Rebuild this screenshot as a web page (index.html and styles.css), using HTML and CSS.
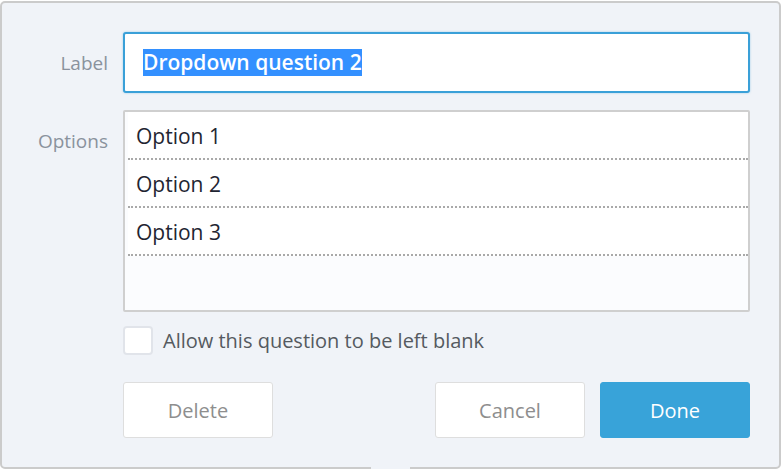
FILE: index.html
```html
<!DOCTYPE html>
<html lang="en">
<head>
<meta charset="utf-8">
<title>Dropdown question</title>
<link rel="stylesheet" href="styles.css">
</head>
<body>
<div class="panel">
  <div class="form">
    <div class="field-label label-center">Label</div>
    <div class="text-input"><span class="selected">Dropdown question 2</span></div>

    <div class="field-label label-top">Options</div>
    <div class="options">
      <div class="option">Option 1</div>
      <div class="option">Option 2</div>
      <div class="option">Option 3</div>
      <div class="option-empty"></div>
    </div>

    <div class="spacer"></div>
    <label class="check-row">
      <span class="checkbox"></span>
      <span class="check-text">Allow this question to be left blank</span>
    </label>

    <div class="spacer"></div>
    <div class="actions">
      <button class="btn btn-light">Delete</button>
      <div class="actions-right">
        <button class="btn btn-light">Cancel</button>
        <button class="btn btn-primary">Done</button>
      </div>
    </div>
  </div>
  <div class="notch"></div>
</div>
</body>
</html>
```

FILE: styles.css
```css
* { box-sizing: border-box; }

html, body {
  margin: 0;
  padding: 0;
  background: #ffffff;
}

body {
  font-family: "Open Sans", "Noto Sans", "Liberation Sans", sans-serif;
  width: 782px;
  height: 469px;
  overflow: hidden;
}

.panel {
  position: relative;
  margin-top: 1px;
  width: 781px;
  height: 468px;
  background: #f0f3f8;
  border: 2px solid #cbcbcb;
  border-radius: 5px;
  padding: 29px 29px 29px 0;
}

.form {
  display: grid;
  grid-template-columns: 106px 1fr;
  column-gap: 15px;
  row-gap: 0;
}

.field-label {
  font-size: 19px;
  line-height: 26px;
  color: #8a929d;
  text-align: right;
}

.label-center {
  align-self: center;
}

.label-top {
  margin-top: 35px;
}

.text-input {
  height: 61px;
  background: #ffffff;
  border: 2px solid #3aa0d8;
  border-radius: 3px;
  box-shadow: 0 0 2px rgba(58, 160, 216, 0.5);
  padding-left: 18px;
  display: flex;
  align-items: center;
}

.selected {
  font-size: 21px;
  font-weight: 600;
  color: #ffffff;
  background: #3390ff;
  line-height: 27px;
}

.options {
  margin-top: 17px;
  height: 202px;
  background: #fbfcfe;
  border: 2px solid #cfcfcf;
  border-radius: 2px;
  display: flex;
  flex-direction: column;
}

.option {
  height: 48px;
  margin: 0 0 0 3px;
  padding-left: 8px;
  padding-top: 1px;
  background: #ffffff;
  border-bottom: 2px dotted #a9a9a9;
  font-size: 21px;
  font-weight: 500;
  line-height: 46px;
  color: #1f2532;
}

.option-empty {
  flex: 1;
}

.check-row {
  margin-top: 14px;
  display: flex;
  align-items: center;
  gap: 10px;
}

.checkbox {
  width: 30px;
  height: 29px;
  background: #ffffff;
  border: 2px solid #e1e4ea;
  border-radius: 4px;
  flex: none;
}

.check-text {
  font-size: 20px;
  line-height: 28px;
  color: #555a60;
}

.actions {
  margin-top: 27px;
  display: flex;
  justify-content: space-between;
}

.actions-right {
  display: flex;
  gap: 15px;
}

.btn {
  width: 150px;
  height: 56px;
  border-radius: 3px;
  font-family: "Open Sans", "Noto Sans", "Liberation Sans", sans-serif;
  font-size: 20px;
  padding: 0;
  cursor: pointer;
}

.btn-light {
  background: #ffffff;
  border: 1px solid #dedede;
  color: #8e8e8e;
}

.btn-primary {
  background: #38a3d9;
  border: 1px solid #38a3d9;
  color: #ffffff;
}

.notch {
  position: absolute;
  left: 369px;
  bottom: -2px;
  width: 39px;
  height: 2px;
  background: #f0f3f8;
}
```
